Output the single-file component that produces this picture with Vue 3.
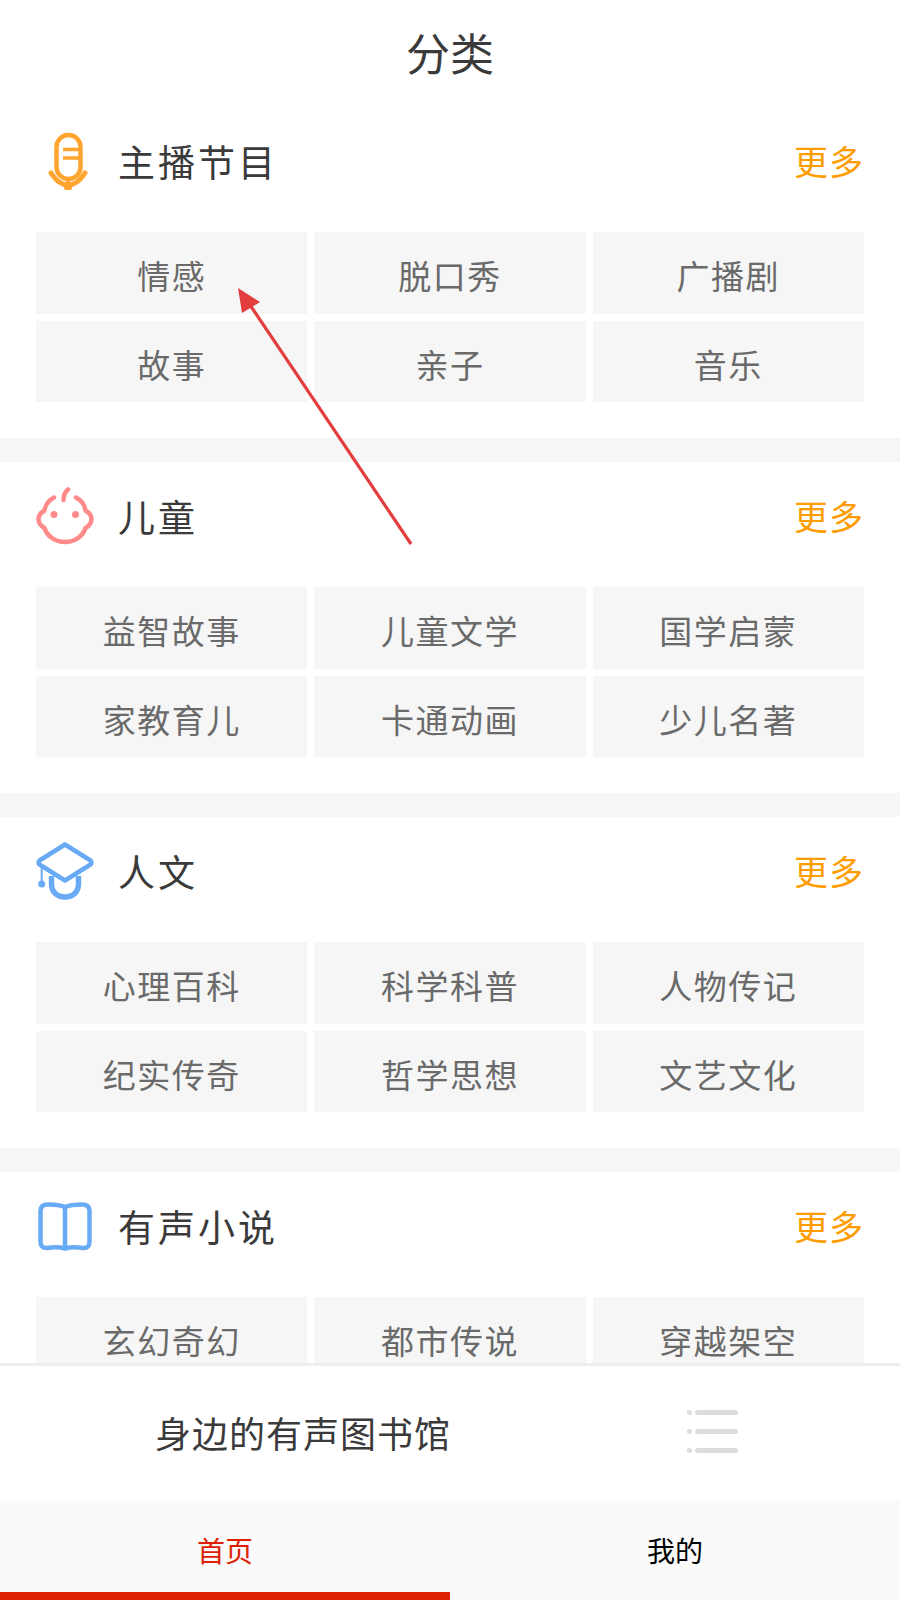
<script setup>
const sections = [
  { title: '主播节目', icon: 'mic', items: ['情感', '脱口秀', '广播剧', '故事', '亲子', '音乐'] },
  { title: '儿童', icon: 'baby', items: ['益智故事', '儿童文学', '国学启蒙', '家教育儿', '卡通动画', '少儿名著'] },
  { title: '人文', icon: 'cap', items: ['心理百科', '科学科普', '人物传记', '纪实传奇', '哲学思想', '文艺文化'] },
  { title: '有声小说', icon: 'book', items: ['玄幻奇幻', '都市传说', '穿越架空'] },
]
</script>

<template>
  <div class="page">
    <h1 class="title">分类</h1>
    <section v-for="s in sections" :key="s.title" class="section">
      <header class="head">
        <svg v-if="s.icon === 'mic'" class="icon" viewBox="0 0 58 58" fill="none">
          <rect x="20.500" y="3" width="24" height="44" rx="12" stroke="#ffa42e" stroke-width="4.500" />
          <path d="M27 17.500H43M27 26H43" stroke="#ffa42e" stroke-width="3.500" />
          <path d="M15 41C20 49 26 53 32 53C38 53 44 49 49 41" stroke="#ffa42e" stroke-width="5" stroke-linecap="round" />
          <path d="M32 53V55" stroke="#ffa42e" stroke-width="8" stroke-linecap="round" />
        </svg>
        <svg v-else-if="s.icon === 'baby'" class="icon" viewBox="0 0 58 58" fill="none" stroke="#ff8a8a" stroke-width="4.500" stroke-linecap="round" stroke-linejoin="round">
          <path d="M18 10.500C13 13 9.500 17 8.500 23.500C5 25.500 2.500 28.500 2.500 32C2.500 36 5 39 8.500 41C11 49 19 55 29 55C39 55 47 49 49.500 41C53 39 55.500 36 55.500 32C55.500 28.500 53 25.500 49.500 23.500C48.500 17 45 13 40 10.500" />
          <path d="M27.500 13C27.500 9 29 5 32 2.500" />
          <circle cx="18" cy="27.500" r="3.500" fill="#ff8a8a" stroke="none" />
          <circle cx="39.500" cy="27.500" r="3.500" fill="#ff8a8a" stroke="none" />
        </svg>
        <svg v-else-if="s.icon === 'cap'" class="icon" viewBox="0 0 58 58" fill="none" stroke="#69aaf5" stroke-width="4.500" stroke-linecap="round" stroke-linejoin="round">
          <path d="M29 2.500L54.500 18.500C55.800 19.500 55.800 21.500 54.500 22.500L29 38.500L3.500 22.500C2.200 21.500 2.200 19.500 3.500 18.500Z" />
          <path d="M15.500 34V42C15.500 50 21 55 29 55C37 55 42.500 50 42.500 42V34" stroke-width="5.500" stroke-linecap="butt" />
          <path d="M5.700 24V41" stroke-width="2" />
          <circle cx="5.700" cy="42" r="3.500" fill="#69aaf5" stroke="none" />
        </svg>
        <svg v-else class="icon" viewBox="0 0 58 58" fill="none" stroke="#69aaf5" stroke-width="4.500" stroke-linecap="round" stroke-linejoin="round">
          <path d="M29 10C24 8 17 7.500 12 7.500C7 7.500 4.500 10 4.500 14V45C4.500 49 7 51.500 11 51C17 50 24 50 29 51.500C34 50 41 50 47 51C51 51.500 53.500 49 53.500 45V14C53.500 10 51 7.500 46 7.500C41 7.500 34 8 29 10Z" />
          <path d="M29 10V51" />
        </svg>
        <h2 class="name">{{ s.title }}</h2>
        <a class="more">更多</a>
      </header>
      <div class="grid">
        <div v-for="item in s.items" :key="item" class="cell">{{ item }}</div>
      </div>
    </section>

    <svg class="arrow" width="200" height="280" viewBox="0 0 200 280">
      <path d="M181 262L18 20" stroke="#e33d3d" stroke-width="3.200" />
      <path d="M8 6L30 20L12 31Z" fill="#e33d3d" />
    </svg>

    <footer class="footer">
      <div class="player">
        <div class="slogan">身边的有声图书馆</div>
        <div class="list-wrap">
          <div v-for="n in 3" :key="n" class="list-row"><i class="dot"></i><i class="bar"></i></div>
        </div>
      </div>
      <nav class="tabs">
        <div class="tab active">首页</div>
        <div class="tab">我的</div>
      </nav>
    </footer>
  </div>
</template>

<style scoped>
.page {
  position: relative;
  width: 900px;
  height: 1600px;
  overflow: hidden;
  background: #fff;
  font-family: "Noto Sans CJK SC", "Liberation Sans", sans-serif;
  font-weight: 400;
}
.title {
  margin: 0;
  height: 107px;
  line-height: 104px;
  text-align: center;
  font-size: 44px;
  font-weight: 400;
  color: #3a3a3a;
}
.section {
  padding: 0 36px 36px;
  border-bottom: 24px solid #f6f6f6;
}
.head {
  display: flex;
  align-items: center;
  box-sizing: border-box;
  height: 125px;
  padding-bottom: 18px;
}
.icon {
  width: 58px;
  height: 58px;
  flex: none;
}
.name {
  margin: 0 0 0 24px;
  flex: 1;
  font-size: 37px;
  font-weight: 400;
  letter-spacing: 3px;
  color: #3a3a3a;
}
.more {
  font-size: 34px;
  letter-spacing: 1px;
  color: #ff9c00;
}
.grid {
  display: grid;
  grid-template-columns: repeat(3, 1fr);
  grid-template-rows: 82px 81px;
  gap: 7px;
}
.cell {
  display: flex;
  align-items: center;
  justify-content: center;
  box-sizing: border-box;
  padding-top: 4px;
  background: #f6f6f6;
  color: #6a6a6a;
  font-size: 33px;
  letter-spacing: 1.500px;
}
.arrow {
  position: absolute;
  left: 230px;
  top: 282px;
}
.footer {
  position: absolute;
  left: 0;
  right: 0;
  bottom: 0;
  background: #fff;
}
.player {
  display: flex;
  align-items: center;
  height: 134px;
  border-top: 3px solid #eee;
}
.slogan {
  width: 606px;
  margin-bottom: 2px;
  text-align: center;
  font-size: 36px;
  letter-spacing: 1px;
  color: #3a3a3a;
}
.list-wrap {
  display: flex;
  flex-direction: column;
  gap: 14px;
  margin: 0 0 4px 81px;
}
.list-row {
  display: flex;
  align-items: center;
  gap: 3px;
}
.dot {
  width: 5px;
  height: 5px;
  border-radius: 50%;
  background: #dcdcdc;
}
.bar {
  width: 43px;
  height: 5px;
  border-radius: 3px;
  background: #dcdcdc;
}
.tabs {
  display: flex;
  height: 100px;
  background: #fafafa;
}
.tab {
  position: relative;
  flex: 1;
  padding-top: 30px;
  text-align: center;
  font-size: 28px;
  line-height: 40px;
  color: #000;
}
.tab.active {
  color: #dd2000;
}
.tab.active::after {
  content: "";
  position: absolute;
  left: 0;
  right: 0;
  bottom: 0;
  height: 8px;
  background: #dd2000;
}
</style>
